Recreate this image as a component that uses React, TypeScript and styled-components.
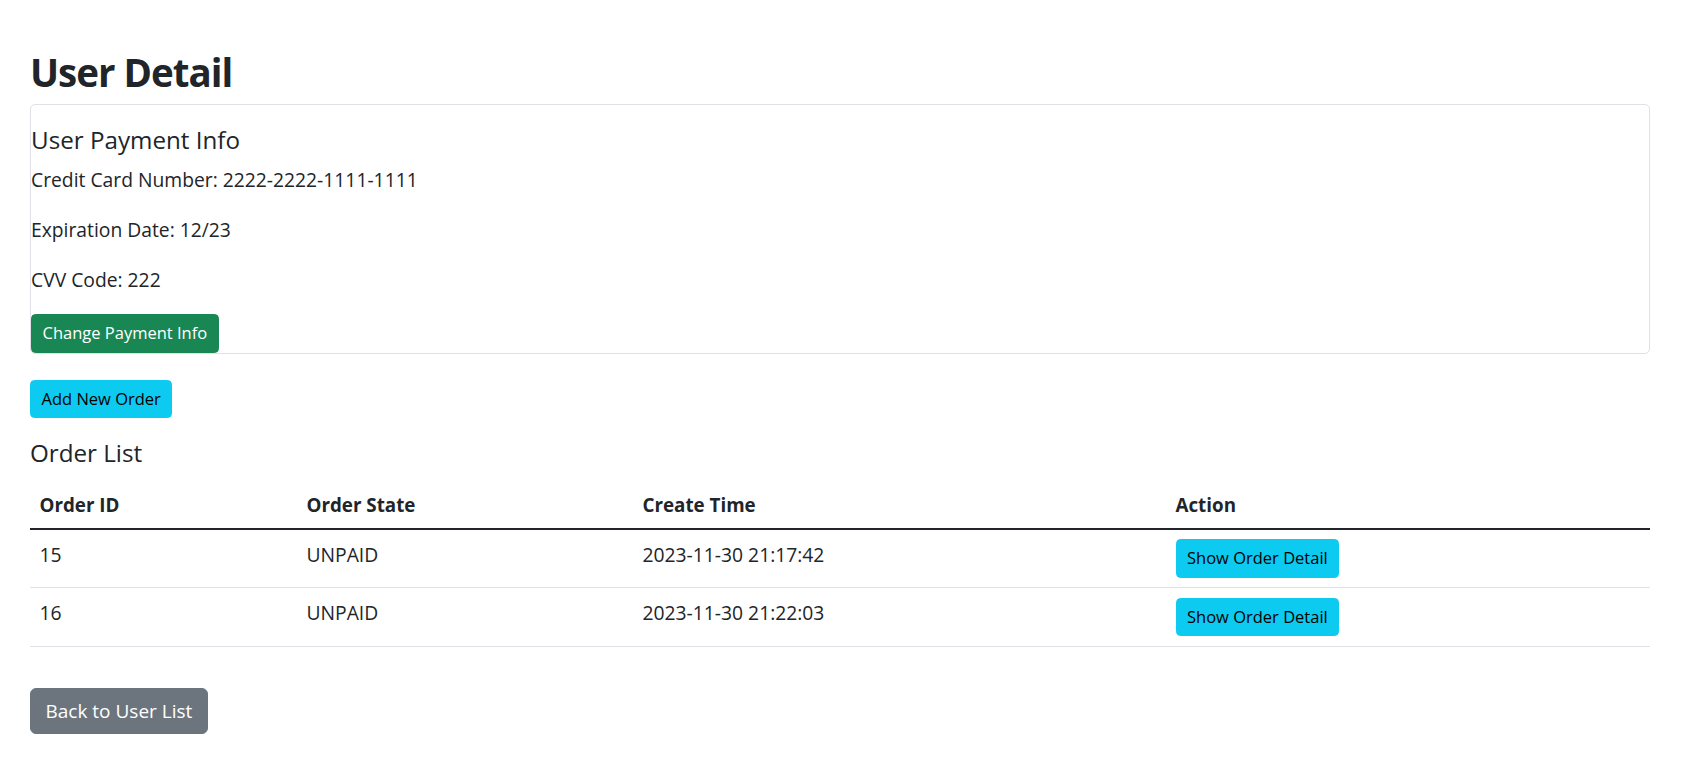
import React from "react";
import styled, {createGlobalStyle, css} from "styled-components";

const GlobalStyle = createGlobalStyle`
    body {
        margin: 0;
        background: #FFFFFF;
        color: #212529;
        font-family: "Open Sans", "Noto Sans", sans-serif;
        font-size: 19.3px;
        line-height: 26.4px;
    }
`

type Order = {
    id: number
    state: string
    createTime: string
}

const orders: Order[] = [
    {id: 15, state: 'UNPAID', createTime: '2023-11-30 21:17:42'},
    {id: 16, state: 'UNPAID', createTime: '2023-11-30 21:22:03'},
]

const columns = [
    {title: 'Order ID', width: 267},
    {title: 'Order State', width: 336},
    {title: 'Create Time', width: 533},
    {title: 'Action', width: 484},
]

const App: React.FC = function () {
    return (
        <Page>
            <GlobalStyle/>
            <Title>User Detail</Title>
            <Card>
                <SubTitle>User Payment Info</SubTitle>
                <Field>Credit Card Number: 2222-2222-1111-1111</Field>
                <Field>Expiration Date: 12/23</Field>
                <Field>CVV Code: 222</Field>
                <Button variant='success'>Change Payment Info</Button>
            </Card>
            <AddButton variant='info'>Add New Order</AddButton>
            <ListTitle>Order List</ListTitle>
            <Table>
                <colgroup>
                    {columns.map(c => <col key={c.title} style={{width: c.width}}/>)}
                </colgroup>
                <thead>
                    <tr>
                        {columns.map(c => <HeadCell key={c.title}>{c.title}</HeadCell>)}
                    </tr>
                </thead>
                <tbody>
                    {orders.map(order => (
                        <tr key={order.id}>
                            <Cell>{order.id}</Cell>
                            <Cell>{order.state}</Cell>
                            <Cell>{order.createTime}</Cell>
                            <Cell action>
                                <Button variant='info'>Show Order Detail</Button>
                            </Cell>
                        </tr>
                    ))}
                </tbody>
            </Table>
            <BackButton variant='secondary' large>Back to User List</BackButton>
        </Page>
    )
}

export default App

const Page = styled.main`
    width: 1620px;
    padding: 45.5px 0 40px 30px;
`
const Title = styled.h1`
    margin: 0 0 6px;
    font-size: 38.5px;
    font-weight: 700;
    line-height: 52.8px;
    letter-spacing: -1px;
`
const Card = styled.section`
    display: flex;
    flex-direction: column;
    align-items: flex-start;
    padding-top: 18.5px;
    border: 1px solid #dee2e6;
    border-radius: 5px;
`
const SubTitle = styled.h4`
    margin: 0 0 11px;
    font-size: 24.2px;
    font-weight: 500;
    line-height: 31.7px;
`
const ListTitle = styled(SubTitle)`
    margin: 19px 0 13px;
`
const Field = styled.p`
    margin: 0 0 23.6px;

    &:last-of-type {
        margin-bottom: 21.5px;
    }
`
const variants = {
    success: css`
        background: #198754;
        border-color: #198754;
        color: #FFFFFF;
    `,
    info: css`
        background: #0dcaf0;
        border-color: #0dcaf0;
        color: #000000;
    `,
    secondary: css`
        background: #6c757d;
        border-color: #6c757d;
        color: #FFFFFF;
    `,
}
const Button = styled.button<{variant: keyof typeof variants, large?: boolean}>`
    display: block;
    padding: 5px 10.5px;
    border: 1px solid transparent;
    border-radius: 4.5px;
    font-family: inherit;
    font-size: 16.5px;
    line-height: 26.4px;
    cursor: pointer;

    ${props => variants[props.variant]}

    ${props => props.large && css`
        padding: 5.5px 14.5px;
        border-radius: 6px;
        font-size: 19px;
        line-height: 33px;
    `}
`
const AddButton = styled(Button)`
    margin-top: 26px;
`
const BackButton = styled(Button)`
    margin-top: 41.6px;
`
const Table = styled.table`
    width: 100%;
    table-layout: fixed;
    border-collapse: collapse;
`
const HeadCell = styled.th`
    padding: 10px 9.5px 9.5px;
    text-align: left;
    font-size: 18.8px;
    font-weight: 700;
    border-bottom: 2px solid #212529;
`
const Cell = styled.td<{action?: boolean}>`
    padding: ${props => props.action ? '9.5px' : '12px 9.5px 9.5px'};
    vertical-align: top;
    border-bottom: 1px solid #dee2e6;
`
